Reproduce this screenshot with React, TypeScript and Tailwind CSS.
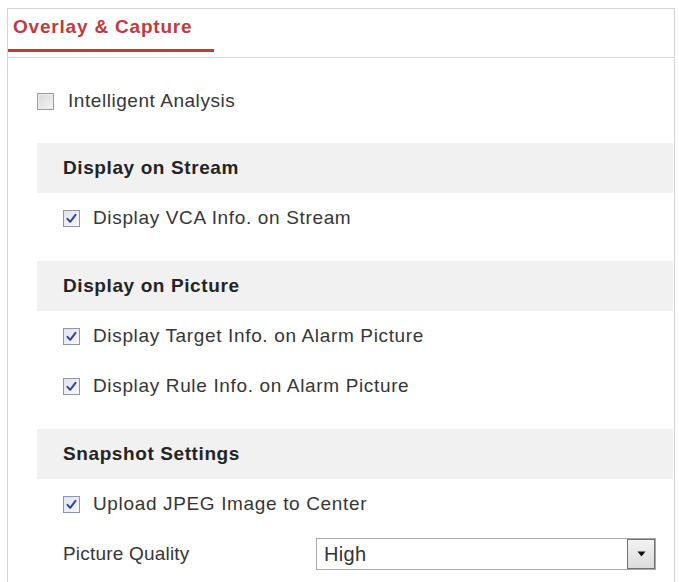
import React from "react";

const font = { fontFamily: '"Liberation Sans", Arial, sans-serif' };

function CheckBox({ checked }: { checked: boolean }) {
  if (!checked) {
    return (
      <div className="w-[17px] h-[17px] shrink-0 border border-[#9c9c9c] bg-gradient-to-br from-[#d9d9d9] to-[#f4f4f4] shadow-[inset_0_0_0_1px_#ececec]" />
    );
  }
  return (
    <div className="w-[17px] h-[17px] shrink-0 border border-[#8b96b0] bg-gradient-to-br from-[#dfe3ec] to-[#f7f8fb] flex items-center justify-center">
      <svg width="11" height="11" viewBox="0 0 11 11">
        <path d="M1.5 5.8 L4.2 8.8 L9.5 1.8" fill="none" stroke="#34449a" strokeWidth="2" strokeLinecap="round" strokeLinejoin="round" />
      </svg>
    </div>
  );
}

function CheckRow({ label, checked = true }: { label: string; checked?: boolean }) {
  return (
    <div className="h-[50px] flex items-center pl-[26px] gap-[13px]">
      <CheckBox checked={checked} />
      <span className="text-[19px] tracking-[0.65px] text-[#363636]">{label}</span>
    </div>
  );
}

function Band({ title }: { title: string }) {
  return (
    <div className="h-[50px] bg-[#f1f1f1] flex items-center pl-[26px]">
      <span className="text-[19px] font-bold tracking-[0.6px] text-[#242424]">{title}</span>
    </div>
  );
}

export default function App() {
  return (
    <div className="w-[679px] h-[582px] overflow-hidden bg-white pt-[8px] pl-[7px] pr-[4px]" style={font}>
      <div className="border border-b-0 border-[#d4d4d4] h-[620px]">
        <div className="h-[49px] border-b border-[#d9d9d9] flex items-start">
          <div className="w-[206px] h-[43px] border-b-[3px] border-[#c8373c] flex items-center pl-[5px] pb-[4px]">
            <span className="text-[19px] font-bold tracking-[0.8px] text-[#c23a40]">Overlay &amp; Capture</span>
          </div>
        </div>
        <div className="pt-[18px] pl-[29px] pr-[1px]">
          <div className="h-[50px] flex items-center gap-[14px]">
            <CheckBox checked={false} />
            <span className="text-[19px] tracking-[0.55px] text-[#363636]">Intelligent Analysis</span>
          </div>
          <div className="mt-[17px]">
            <Band title="Display on Stream" />
            <CheckRow label="Display VCA Info. on Stream" />
          </div>
          <div className="mt-[18px]">
            <Band title="Display on Picture" />
            <CheckRow label="Display Target Info. on Alarm Picture" />
            <CheckRow label="Display Rule Info. on Alarm Picture" />
          </div>
          <div className="mt-[18px]">
            <Band title="Snapshot Settings" />
            <CheckRow label="Upload JPEG Image to Center" />
            <div className="h-[50px] flex items-center pl-[26px]">
              <span className="w-[253px] text-[19px] tracking-[0.2px] text-[#363636]">Picture Quality</span>
              <div className="w-[340px] h-[32px] border border-[#a8a8a8] bg-white flex items-center justify-between">
                <span className="pl-[7px] text-[20px] tracking-[0.3px] text-[#333333]">High</span>
                <div className="w-[28px] h-[30px] border border-[#707070] bg-gradient-to-b from-[#f3f3f3] to-[#dcdcdc] flex items-center justify-center">
                  <svg width="9" height="6" viewBox="0 0 9 6">
                    <path d="M0.5 0.5 L8.5 0.5 L4.5 5.5 Z" fill="#111111" />
                  </svg>
                </div>
              </div>
            </div>
          </div>
        </div>
      </div>
    </div>
  );
}
